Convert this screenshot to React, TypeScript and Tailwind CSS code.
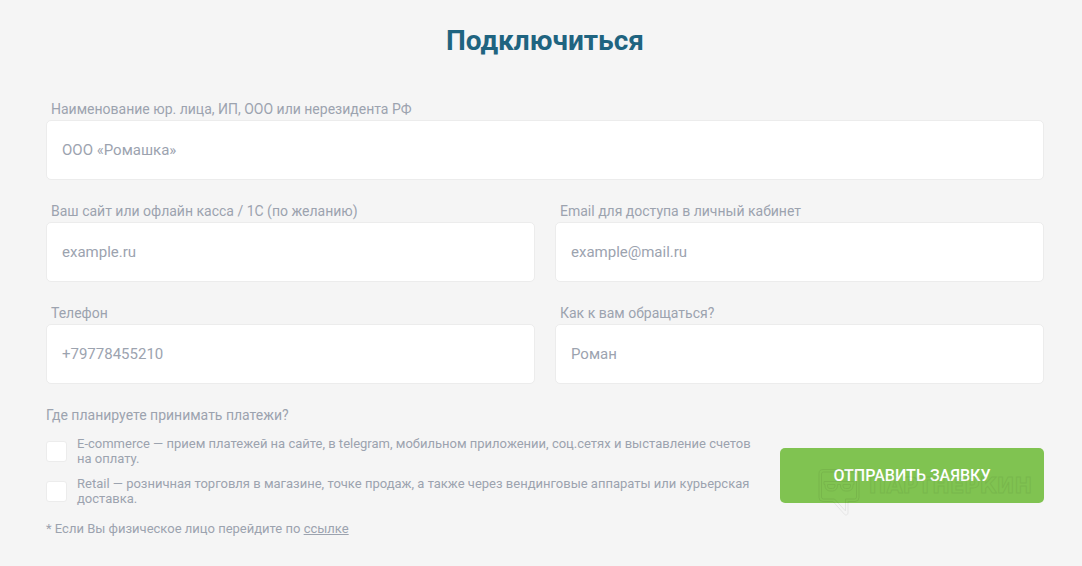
type Field = {
  id: string;
  label: string;
  placeholder: string;
  type: string;
  wide?: boolean;
};

const FIELDS: Field[] = [
  {
    id: 'company',
    label: 'Наименование юр. лица, ИП, ООО или нерезидента РФ',
    placeholder: 'ООО «Ромашка»',
    type: 'text',
    wide: true,
  },
  {
    id: 'site',
    label: 'Ваш сайт или офлайн касса / 1С (по желанию)',
    placeholder: 'example.ru',
    type: 'text',
  },
  {
    id: 'email',
    label: 'Email для доступа в личный кабинет',
    placeholder: 'example@mail.ru',
    type: 'email',
  },
  { id: 'phone', label: 'Телефон', placeholder: '+79778455210', type: 'tel' },
  { id: 'name', label: 'Как к вам обращаться?', placeholder: 'Роман', type: 'text' },
];

const CHANNELS = [
  {
    id: 'ecommerce',
    text: 'E-commerce — прием платежей на сайте, в telegram, мобильном приложении, соц.сетях и выставление счетов на оплату.',
  },
  {
    id: 'retail',
    text: 'Retail — розничная торговля в магазине, точке продаж, а также через вендинговые аппараты или курьерская доставка.',
  },
];

function Watermark() {
  return (
    <div
      aria-hidden="true"
      className="pointer-events-none absolute top-5 right-3 flex items-start gap-2 opacity-[0.06]"
    >
      <svg width="44" height="48" viewBox="0 0 44 48" fill="none" stroke="#000" strokeWidth="1">
        <path d="M6 1.5h32a4 4 0 0 1 4 4v24a4 4 0 0 1-4 4h-7v11.500a2 2 0 0 1-3.500 1.300L16 33.500H6a4 4 0 0 1-4-4v-24a4 4 0 0 1 4-4Z" />
        <path d="M6.500 4h31a2 2 0 0 1 2 2v23a2 2 0 0 1-2 2h-9v12L17.500 31h-11a2 2 0 0 1-2-2V6a2 2 0 0 1 2-2Z" />
        <path d="M7 13.500h30v3h-1v1.500a5 5 0 0 1-5 5h-2.500a5 5 0 0 1-5-5v-1.500h-3V18a5 5 0 0 1-5 5H13a5 5 0 0 1-5-5v-1.500H7Z" />
        <path d="M10.500 16.500H18V18a2.500 2.500 0 0 1-2.500 2.500H13a2.500 2.500 0 0 1-2.500-2.500ZM26 16.500h7.500V18a2.500 2.500 0 0 1-2.500 2.500h-2.500A2.500 2.500 0 0 1 26 18Z" />
      </svg>
      <span className="mt-1 font-['DejaVu_Sans'] text-[21px] leading-7 font-bold text-transparent [-webkit-text-stroke:1px_#000]">
        ПАРТНЕРКИН
      </span>
    </div>
  );
}

export default function App() {
  return (
    <main className="min-h-screen bg-[#f5f5f5] pt-[21px] pr-[38px] pb-3 pl-[46px] font-[Roboto,sans-serif] text-[#9ca3af]">
      <h1 className="text-center text-[28px] leading-10 font-bold text-[#1f6480]">Подключиться</h1>

      <form className="mt-[39px]" onSubmit={(e) => e.preventDefault()}>
        <div className="grid grid-cols-2 gap-x-5 gap-y-[22px]">
          {FIELDS.map((field) => (
            <div key={field.id} className={field.wide ? 'col-span-2' : ''}>
              <label htmlFor={field.id} className="block pl-[5px] text-sm leading-[18px]">
                {field.label}
              </label>
              <input
                id={field.id}
                type={field.type}
                placeholder={field.placeholder}
                className="mt-[2px] block h-[60px] w-full rounded-[5px] border border-[#ececec] bg-white px-[15px] text-[15px] text-gray-700 outline-none placeholder:text-[#9ca3af] focus:border-[#80c351]"
              />
            </div>
          ))}
        </div>

        <div className="mt-[21px] flex items-center gap-7">
          <fieldset className="min-w-0 flex-1 pb-[10px]">
            <legend className="text-sm leading-5">Где планируете принимать платежи?</legend>
            <div className="mt-[11px] flex flex-col gap-[10px]">
              {CHANNELS.map((channel) => (
                <label
                  key={channel.id}
                  htmlFor={channel.id}
                  className="flex items-center gap-[10px] text-[13px] leading-[15px]"
                >
                  <input
                    id={channel.id}
                    type="checkbox"
                    className="size-[21px] shrink-0 appearance-none rounded-[3px] border border-[#ececec] bg-white checked:bg-[#80c351]"
                  />
                  <span>{channel.text}</span>
                </label>
              ))}
            </div>
            <p className="mt-[15px] text-[13px] leading-[15px]">
              * Если Вы физическое лицо перейдите по{' '}
              <a href="#individual" className="underline">
                ссылке
              </a>
            </p>
          </fieldset>

          <div className="relative w-[264px] shrink-0">
            <button
              type="submit"
              className="h-[55px] w-full rounded-[5px] bg-[#80c351] text-base font-medium text-white uppercase"
            >
              Отправить заявку
            </button>
            <Watermark />
          </div>
        </div>
      </form>
    </main>
  );
}
